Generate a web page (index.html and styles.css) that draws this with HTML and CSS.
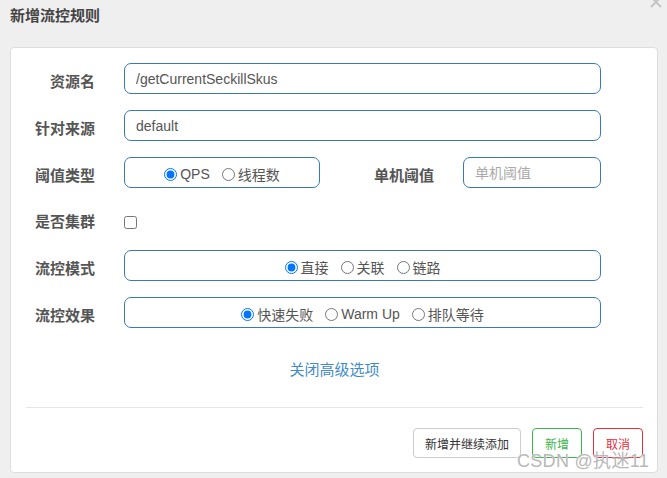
FILE: index.html
```html
<!DOCTYPE html>
<html lang="zh-CN">
<head>
<meta charset="UTF-8" />
<meta name="viewport" content="width=device-width, initial-scale=1" />
<title>新增流控规则</title>
<link rel="stylesheet" href="styles.css">
</head>
<body>

<div class="modal">
  <div class="modal-header">
    <h4 class="modal-title">新增流控规则</h4>
    <button class="close" type="button" aria-label="关闭">
      <svg width="12" height="12" viewBox="0 0 12 12"><path d="M1 1 L11 11 M11 1 L1 11" stroke="#c4c4c4" stroke-width="2" fill="none"/></svg>
    </button>
  </div>

  <div class="card">
    <form class="rule-form">
      <label class="form-label">资源名</label>
      <input class="form-input wide" type="text" value="/getCurrentSeckillSkus">

      <label class="form-label">针对来源</label>
      <input class="form-input wide" type="text" value="default">

      <label class="form-label">阈值类型</label>
      <div class="radio-box">
        <label class="radio"><input type="radio" name="grade" checked>QPS</label>
        <label class="radio"><input type="radio" name="grade">线程数</label>
      </div>
      <label class="form-label">单机阈值</label>
      <input class="form-input" type="text" placeholder="单机阈值">

      <label class="form-label">是否集群</label>
      <div class="check-cell wide"><input type="checkbox"></div>

      <label class="form-label">流控模式</label>
      <div class="radio-box wide">
        <label class="radio"><input type="radio" name="strategy" checked>直接</label>
        <label class="radio"><input type="radio" name="strategy">关联</label>
        <label class="radio"><input type="radio" name="strategy">链路</label>
      </div>

      <label class="form-label">流控效果</label>
      <div class="radio-box wide">
        <label class="radio"><input type="radio" name="behavior" checked>快速失败</label>
        <label class="radio"><input type="radio" name="behavior">Warm Up</label>
        <label class="radio"><input type="radio" name="behavior">排队等待</label>
      </div>
    </form>

    <div class="advanced"><a href="#">关闭高级选项</a></div>

    <div class="footer">
      <button class="btn btn-default" type="button">新增并继续添加</button>
      <button class="btn btn-success" type="button">新增</button>
      <button class="btn btn-danger" type="button">取消</button>
    </div>
  </div>

  <div class="watermark">CSDN @执迷11</div>
</div>

</body>
</html>
```

FILE: styles.css
```css
body {
  margin: 0;
  background: #efefef;
  font-family: "Liberation Sans", "Noto Sans CJK SC", sans-serif;
  color: #333;
}

.modal {
  position: relative;
  width: 667px;
  height: 478px;
  overflow: hidden;
}

/* --- Intestazione --- */
.modal-header {
  height: 47px;
  padding: 0 10px;
}
.modal-title {
  margin: 0;
  padding-top: 6px;
  font-size: 15px;
  font-weight: 600;
  color: #444;
  line-height: 20px;
}
.close {
  position: absolute;
  top: -4px;
  right: 5px;
  padding: 0;
  border: 0;
  background: none;
}

/* --- Riquadro bianco --- */
.card {
  margin-left: 10px;
  width: 646px;
  height: 424px;
  background: #fff;
  border: 1px solid #ddd;
  border-radius: 4px;
}

.rule-form {
  display: grid;
  grid-template-columns: 84px 196px 1fr 138px;
  grid-template-rows: 31px 31px 31px 30px 31px 31px;
  column-gap: 29px;
  row-gap: 16px;
  padding: 15px 56px 0 0;
}
.form-label {
  display: flex;
  align-items: center;
  justify-content: flex-end;
  padding-top: 3px;
  font-size: 15px;
  font-weight: bold;
  color: #555;
}
.wide {
  grid-column: 2 / 5;
}
.form-input {
  box-sizing: border-box;
  height: 31px;
  padding: 0 11px;
  border: 1px solid #3a78b8;
  border-radius: 7px;
  font: 14px "Liberation Sans", "Noto Sans CJK SC", sans-serif;
  color: #555;
  outline: none;
}
.form-input::placeholder {
  color: #aaa;
}

.radio-box {
  display: flex;
  align-items: center;
  justify-content: center;
  gap: 12px;
  padding-top: 3px;
  border: 1px solid #3a78b8;
  border-radius: 7px;
  font-size: 14px;
  color: #555;
}
.radio {
  display: flex;
  align-items: center;
}
.radio input {
  margin: 0 3px 0 0;
  width: 13px;
  height: 13px;
}

.check-cell {
  display: flex;
  align-items: center;
}
.check-cell input {
  margin: 6px 0 0 0;
  width: 13px;
  height: 13px;
}

/* --- Link opzioni avanzate --- */
.advanced {
  margin-top: 31px;
  text-align: center;
  line-height: 22px;
  padding-bottom: 26px;
  border-bottom: 1px solid #e5e5e5;
  margin-left: 15px;
  margin-right: 14px;
}
.advanced a {
  font-size: 15px;
  color: #428bca;
  text-decoration: none;
}

/* --- Pulsanti --- */
.footer {
  display: flex;
  justify-content: flex-end;
  gap: 11px;
  padding: 20px 14px 0 0;
}
.btn {
  height: 30px;
  padding: 0 11px;
  background: #fff;
  border: 1px solid #ccc;
  border-radius: 4px;
  font: 12px "Liberation Sans", "Noto Sans CJK SC", sans-serif;
  color: #333;
}
.btn-success {
  width: 50px;
  border-color: #3cb44b;
  color: #3cb44b;
}
.btn-danger {
  width: 50px;
  border-color: #e0303e;
  color: #e0303e;
}

.watermark {
  position: absolute;
  left: 517px;
  top: 446px;
  font-size: 18px;
  color: #b8b8b8;
  text-shadow: 0 0 1px #fff;
  letter-spacing: 0.3px;
}
```
